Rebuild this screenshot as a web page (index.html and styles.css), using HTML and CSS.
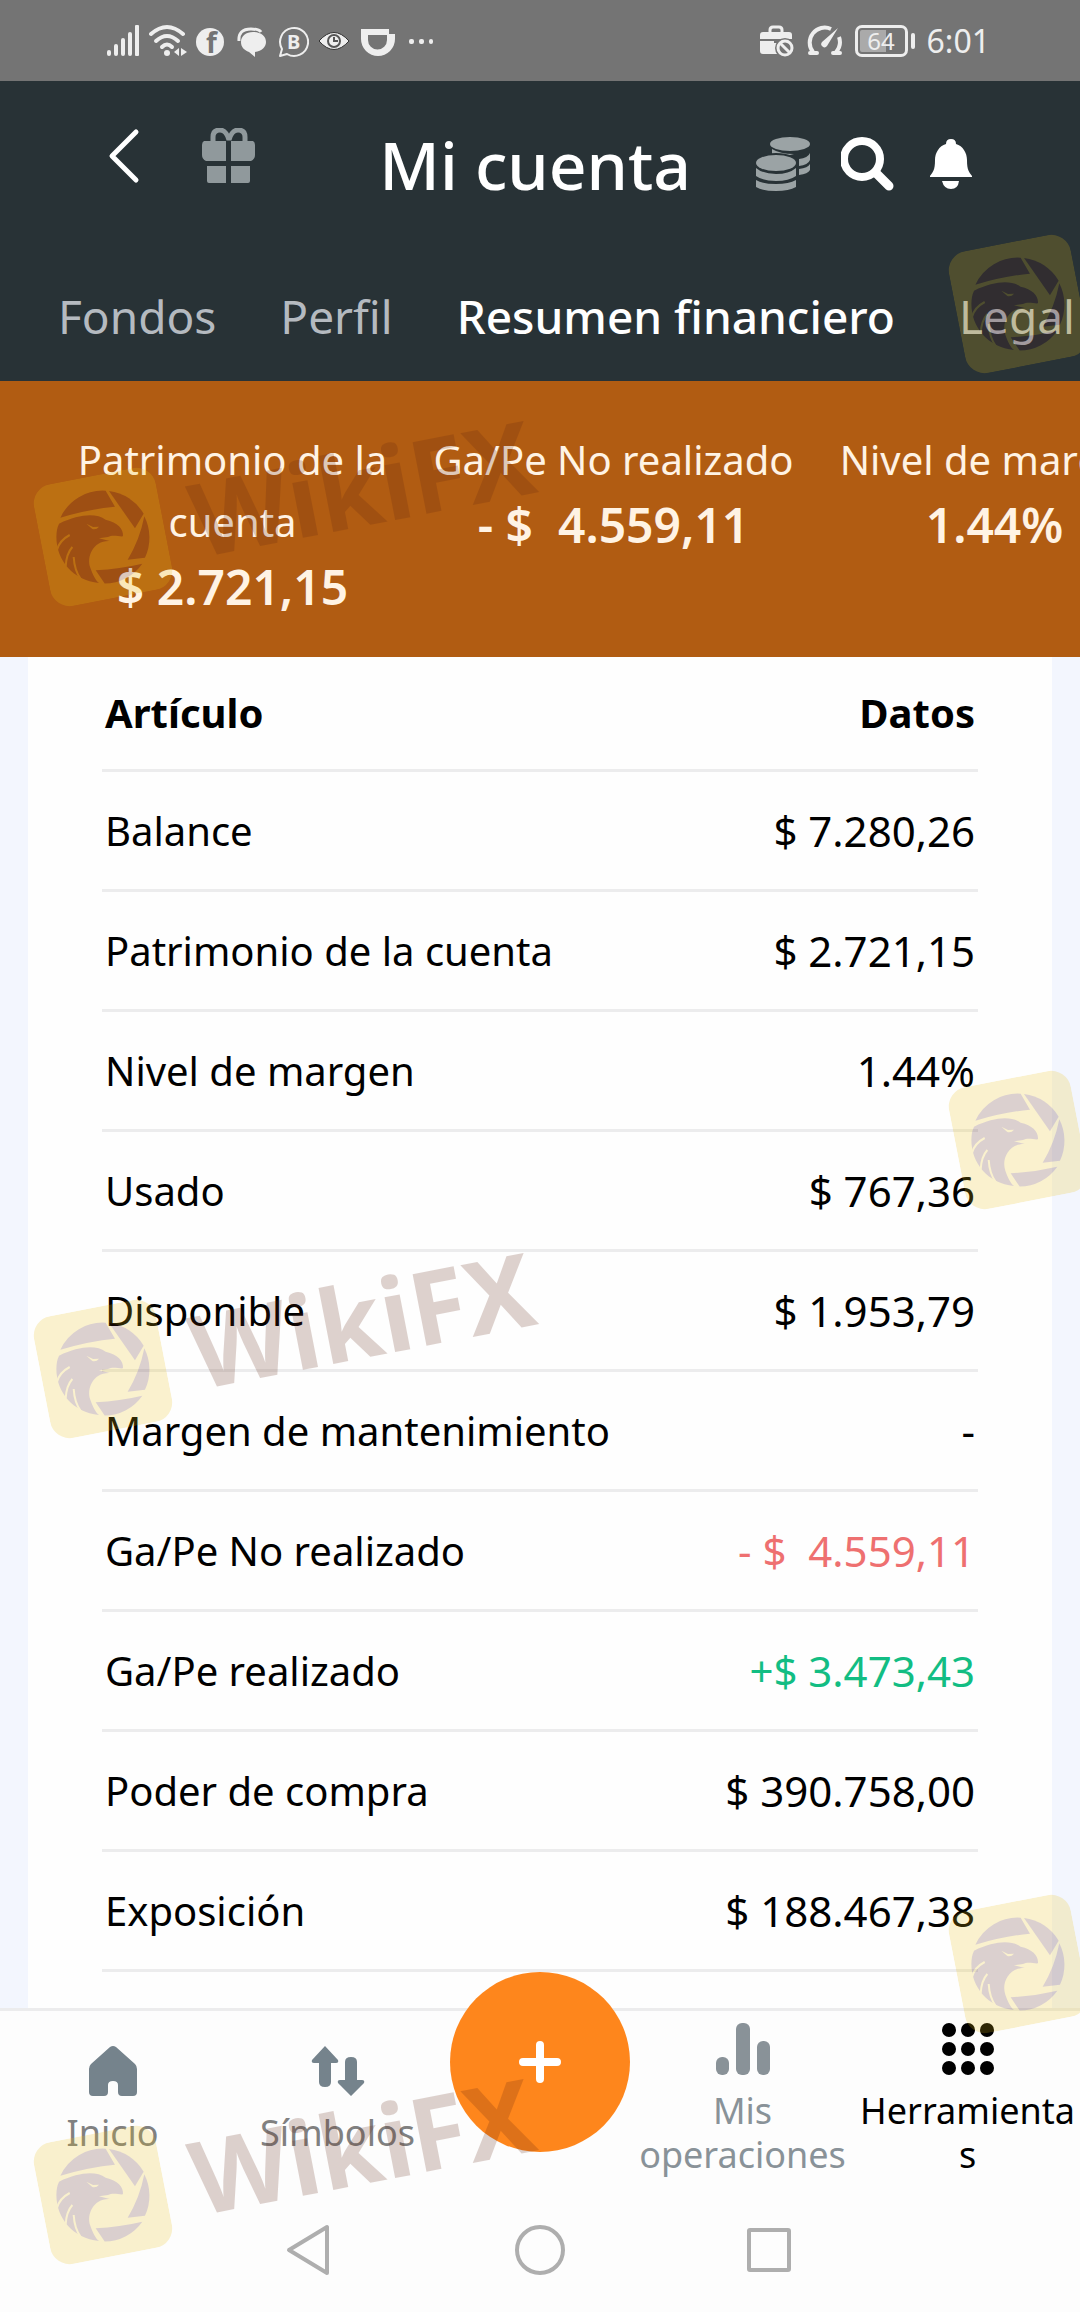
FILE: index.html
```html
<!DOCTYPE html>
<html lang="es">
<head>
    <meta charset="UTF-8">
    <meta name="viewport" content="width=device-width, initial-scale=1">
    <title>Mi cuenta</title>
    <link rel="stylesheet" href="styles.css">
</head>
<body>
<div class="app">

    <div class="status-bar">
        <div class="status-left">
            <svg width="34" height="34" viewBox="0 0 34 34"><g fill="#eee"><rect x="0" y="26" width="4" height="6" rx="2"/><rect x="7" y="20" width="4" height="12" rx="2"/><rect x="14" y="14" width="4" height="18" rx="2"/><rect x="21" y="8" width="4" height="24" rx="2"/><rect x="28" y="1" width="4" height="31" rx="1"/></g></svg>
            <svg width="38" height="34" viewBox="0 0 38 34"><g fill="none" stroke="#eee" stroke-width="4" stroke-linecap="round"><path d="M2 10Q18-4 34 10"/><path d="M7 17Q18 7 29 17"/><path d="M13 23Q18 18 23 23"/></g><circle cx="18" cy="29" r="3" fill="#eee"/><path d="M30 24v8l-5-4zM32 24v8l6-4z" fill="#eee"/></svg>
            <svg width="30" height="34" viewBox="0 0 30 34"><circle cx="15" cy="18" r="14" fill="#eee"/><text x="11" y="29" class="glyph-f">f</text></svg>
            <svg width="36" height="34" viewBox="0 0 36 34"><path d="M6 17Q5 5 18 5q8 0 10 3" fill="none" stroke="#eee" stroke-width="3"/><path d="M20 8c8 0 13 4 13 10 0 5-4 9-11 10v5l-6-5c-5-2-8-5-8-10 0-6 5-10 12-10z" fill="#eee"/></svg>
            <svg width="32" height="34" viewBox="0 0 32 34"><path d="M3 32l2-7a14 14 0 1 1 5 5z" fill="none" stroke="#eee" stroke-width="2" stroke-linejoin="round"/><text x="10" y="25" class="glyph-b">B</text></svg>
            <svg width="34" height="34" viewBox="0 0 34 34"><path d="M2 17Q17 0 32 17Q17 34 2 17z" fill="#eee" stroke="#333" stroke-width="1"/><circle cx="17" cy="17" r="6" fill="#eee" stroke="#555" stroke-width="2"/><path d="M17 13v4h4" fill="none" stroke="#555" stroke-width="2"/></svg>
            <svg width="36" height="34" viewBox="0 0 36 34"><path d="M2 5h28v5h6v5a17 17 0 0 1-34 0zM9 11v5a9 9 0 0 0 19 0v-5z" fill="#eee" fill-rule="evenodd"/></svg>
            <svg width="30" height="34" viewBox="0 0 30 34"><g fill="#eee"><rect x="6" y="15" width="5" height="5" rx="2"/><rect x="16" y="15" width="5" height="5" rx="2"/><rect x="26" y="15" width="4" height="5" rx="2"/></g></svg>
        </div>
        <div class="status-right">
            <svg width="36" height="34" viewBox="0 0 36 34"><path d="M11 9V6q0-3 3-3h6q3 0 3 3v3" fill="none" stroke="#eee" stroke-width="3"/><path d="M1 11q0-3 3-3h26q3 0 3 3v4H1zM1 17h14v2h4q-3 4-1 11H4q-3 0-3-3z" fill="#eee"/><circle cx="26" cy="24" r="10" fill="#747474"/><circle cx="26" cy="24" r="7" fill="none" stroke="#eee" stroke-width="3"/><path d="M21 19l10 10" stroke="#eee" stroke-width="3"/></svg>
            <svg width="36" height="34" viewBox="0 0 36 34"><path d="M24 5A15 15 0 0 0 6 28M32 13a15 15 0 0 1-3 15" fill="none" stroke="#eee" stroke-width="4"/><path d="M3 29h7M26 29h7" stroke="#eee" stroke-width="4" stroke-linecap="round"/><path d="M31 4L20 22a3 3 0 0 1-5-4z" fill="#eee"/></svg>
            <span class="battery">64</span>
            <span class="clock">6:01</span>
        </div>
    </div>

    <header class="header">
        <div class="title-row">
            <div class="title-left">
                <button type="button" aria-label="Volver">
                    <svg width="32" height="56" viewBox="0 0 32 56"><path d="M28 4L4 28L28 52" fill="none" stroke="#fff" stroke-width="5" stroke-linecap="round" stroke-linejoin="round"/></svg>
                </button>
                <button type="button" aria-label="Regalos">
                    <svg width="56" height="56" viewBox="0 0 56 56"><path d="M13 14V9q0-7 7-7c5 0 8 6 9 10c1-4 4-10 9-10q7 0 7 7v5" fill="none" stroke="#90999c" stroke-width="5"/><g fill="#90999c"><path d="M4 13h22v20H6q-4-2-4-6V17q0-3 2-4zM31 13h22q2 1 2 4v10q0 4-4 6H31zM7 38h19v17H9q-2 0-2-2zM31 38h19v15q0 2-2 2H31z"/></g></svg>
                </button>
            </div>
            <h1>Mi cuenta</h1>
            <div class="title-right">
                <button type="button" aria-label="Depósitos">
                    <svg width="56" height="56" viewBox="0 0 56 56"><g fill="#9ba3a5"><path d="M44 23q9-1 11-6v7q-2 5-11 6zM44 33q9-1 11-5v6q-2 4-11 5z"/><ellipse cx="35" cy="8" rx="20" ry="7"/><path d="M17 13q8 5 22 5l-8 2q-8-2-14-2z"/></g><ellipse cx="21" cy="27" rx="23" ry="10" fill="#283236"/><g fill="#9ba3a5"><ellipse cx="21" cy="27" rx="20" ry="8"/><path d="M1 32q7 6 20 6t20-6v8q-7 5-20 5T1 40zM1 44q7 4 20 4t20-4v7q-7 4-20 4T1 51z"/></g></svg>
                </button>
                <button type="button" aria-label="Buscar">
                    <svg width="56" height="56" viewBox="0 0 56 56"><circle cx="21" cy="23" r="18" fill="none" stroke="#fff" stroke-width="8"/><path d="M35 37L48 50" stroke="#fff" stroke-width="9" stroke-linecap="round"/></svg>
                </button>
                <button type="button" aria-label="Notificaciones">
                    <svg width="48" height="56" viewBox="0 0 48 56"><path d="M24 3q5 0 5 5c7 2 11 9 11 16 0 10 2 12 5 16v1H3v-1c3-4 5-6 5-16 0-7 4-14 11-16q0-5 5-5zM15 45h17q-1 8-8 8t-9-8z" fill="#fff"/></svg>
                </button>
            </div>
        </div>
        <nav class="tabs">
            <a href="#fondos">Fondos</a>
            <a href="#perfil">Perfil</a>
            <a href="#resumen" class="active">Resumen financiero</a>
            <a href="#legal">Legal</a>
        </nav>
    </header>

    <section class="summary">
        <div class="summary-item">
            <p>Patrimonio de la cuenta</p>
            <strong>$ 2.721,15</strong>
        </div>
        <div class="summary-item">
            <p>Ga/Pe No realizado</p>
            <strong>- $&nbsp; 4.559,11</strong>
        </div>
        <div class="summary-item">
            <p>Nivel de margen</p>
            <strong>1.44%</strong>
        </div>
    </section>

    <main class="content">
        <div class="card">
            <table>
                <thead>
                <tr><th>Artículo</th><th>Datos</th></tr>
                </thead>
                <tbody>
                <tr><td>Balance</td><td>$ 7.280,26</td></tr>
                <tr><td>Patrimonio de la cuenta</td><td>$ 2.721,15</td></tr>
                <tr><td>Nivel de margen</td><td>1.44%</td></tr>
                <tr><td>Usado</td><td>$ 767,36</td></tr>
                <tr><td>Disponible</td><td>$ 1.953,79</td></tr>
                <tr><td>Margen de mantenimiento</td><td>-</td></tr>
                <tr><td>Ga/Pe No realizado</td><td class="loss">- $&nbsp; 4.559,11</td></tr>
                <tr><td>Ga/Pe realizado</td><td class="gain">+$ 3.473,43</td></tr>
                <tr><td>Poder de compra</td><td>$ 390.758,00</td></tr>
                <tr><td>Exposición</td><td>$ 188.467,38</td></tr>
                </tbody>
            </table>
        </div>
    </main>

    <nav class="bottom-nav">
        <a href="#inicio" class="nav-item">
            <svg width="52" height="52" viewBox="0 0 52 52"><path d="M23 2q3-2 6 0L48 19q2 2 2 5v23q0 4-4 4H35q-4 0-4-4v-7q0-4-5-4t-5 4v7q0 4-4 4H6q-4 0-4-4V24q0-3 2-5z" fill="#75838c"/></svg>
            <span>Inicio</span>
        </a>
        <a href="#simbolos" class="nav-item">
            <svg width="54" height="52" viewBox="0 0 54 52"><path d="M14 1L27 15q1 3-2 3h-5v19q0 5-6 5t-6-5V18H3q-3 0-2-3zM40 51L27 38q-1-3 2-3h5V17q0-5 6-5t6 5v18h5q3 0 2 3z" fill="#75838c"/></svg>
            <span>Símbolos</span>
        </a>
        <button type="button" class="add" aria-label="Nueva operación">
            <svg width="42" height="42" viewBox="0 0 42 42"><path d="M21 4v34M4 21h34" stroke="#fff" stroke-width="8" stroke-linecap="round"/></svg>
        </button>
        <a href="#operaciones" class="nav-item tall">
            <svg width="54" height="52" viewBox="0 0 54 52"><g fill="#899298"><rect x="0" y="34" width="13" height="18" rx="6"/><rect x="20" y="0" width="14" height="52" rx="6"/><rect x="41" y="18" width="13" height="34" rx="6"/></g></svg>
            <span>Mis operaciones</span>
        </a>
        <a href="#herramientas" class="nav-item tall active">
            <svg width="52" height="52" viewBox="0 0 52 52"><circle cx="7" cy="7" r="7"/><circle cx="26" cy="7" r="7"/><circle cx="45" cy="7" r="7"/><circle cx="7" cy="26" r="7"/><circle cx="26" cy="26" r="7"/><circle cx="45" cy="26" r="7"/><circle cx="7" cy="45" r="7"/><circle cx="26" cy="45" r="7"/><circle cx="45" cy="45" r="7"/></svg>
            <span>Herramientas</span>
        </a>
    </nav>

    <div class="system-nav">
        <button type="button" aria-label="Atrás"><svg width="52" height="52" viewBox="0 0 52 52"><path d="M42 3v46L4 26z" fill="none" stroke="#aeaeae" stroke-width="4" stroke-linejoin="round"/></svg></button>
        <button type="button" aria-label="Pantalla de inicio"><svg width="52" height="52" viewBox="0 0 52 52"><circle cx="26" cy="26" r="23" fill="none" stroke="#aeaeae" stroke-width="4"/></svg></button>
        <button type="button" aria-label="Recientes"><svg width="52" height="52" viewBox="0 0 52 52"><rect x="6" y="6" width="40" height="40" rx="1" fill="none" stroke="#aeaeae" stroke-width="4"/></svg></button>
    </div>

    <!-- eagle logo, shared by all the marks -->
    <svg class="defs" width="0" height="0">
        <symbol id="eagle" viewBox="0 0 124 124">
            <rect width="124" height="124" rx="20" fill="#ebc014"/>
            <g transform="translate(62 62) rotate(11) scale(.333)" fill="#551e1a">
                <path d="M-128-58A140 140 0 0 1 8-139L36-91Q-40-84-128-58z"/>
                <path d="M18-138A140 140 0 0 1 122-70L96-26z"/>
                <path d="M124-62A140 140 0 0 1 126 62L74 68Q110 10 124-62z"/>
                <path d="M118 80A140 140 0 0 1 5 140L-22 100Q50 96 118 80z"/>
                <path d="M-132-40C-70-70-20-72 8-52C44-44 62-25 60-2C50 0 30-8 15 0L-12 4L20 12C-30 10-50 60-38 92C-30 115-22 130-12 138C-90 130-140 70-140 0Q-140-24-132-40z"/>
                <path d="M-50-40l20 10 18-1q-8 10-20 7z" fill="#ebc014"/>
                <path d="M-138 38Q-130 10-100-6M-112 88Q-110 50-92 30M-88 60Q-86 100-66 128" fill="none" stroke="#ebc014" stroke-width="6"/>
            </g>
        </symbol>
    </svg>
    <div class="mark mark-1"><svg><use href="#eagle"/></svg><span>WikiFX</span></div>
    <div class="mark mark-2"><svg><use href="#eagle"/></svg><span>WikiFX</span></div>
    <div class="mark mark-3"><svg><use href="#eagle"/></svg><span>WikiFX</span></div>
    <div class="mark mark-4"><svg><use href="#eagle"/></svg></div>
    <div class="mark mark-5"><svg><use href="#eagle"/></svg></div>
    <div class="mark mark-6"><svg><use href="#eagle"/></svg></div>
</div>
</body>
</html>
```

FILE: styles.css
```css
* {
    padding: 0;
    margin: 0;
    box-sizing: border-box;
}
body {
    font-family: "Noto Sans", "Open Sans", sans-serif;
    font-size: 40px;
    color: #000;
    background-color: #f3f6fe;
}
a {
    text-decoration: none;
    color: inherit;
}
button {
    border: none;
    background: none;
    font: inherit;
    cursor: pointer;
}
svg {
    display: block;
    flex-shrink: 0;
}
.app {
    position: relative;
    display: flex;
    flex-direction: column;
    height: 100vh;
    overflow: hidden;
}

/* phone status bar */
.status-bar {
    display: flex;
    justify-content: space-between;
    align-items: center;
    height: 81px;
    flex-shrink: 0;
    padding: 0 90px 0 107px;
    background-color: #747474;
    color: #eee;
}
.status-left,
.status-right {
    display: flex;
    align-items: center;
}
.status-left {
    gap: 8px;
}
.status-right {
    gap: 12px;
}
.glyph-f {
    font-size: 28px;
    font-weight: 700;
    fill: #747474;
}
.glyph-b {
    font-size: 20px;
    font-weight: 700;
    fill: #eee;
}
.battery {
    position: relative;
    width: 53px;
    height: 32px;
    margin-right: 7px;
    border: 3px solid #eee;
    border-radius: 7px;
    background: linear-gradient(90deg, #aaa 60%, #747474 60%);
    background-clip: content-box;
    padding: 2px;
    font-size: 24px;
    line-height: 22px;
    text-align: center;
}
.battery::after {
    content: "";
    position: absolute;
    right: -10px;
    top: 5px;
    width: 4px;
    height: 16px;
    border-radius: 2px;
    background-color: #eee;
}
.clock {
    font-size: 32px;
}

/* header */
.header {
    flex-shrink: 0;
    background-color: #283236;
    color: #fff;
}
.title-row {
    display: flex;
    align-items: center;
    height: 166px;
    padding: 0 105px 0 108px;
}
.title-left {
    display: flex;
    gap: 60px;
    padding-bottom: 16px;
}
.title-right {
    display: flex;
    gap: 30px;
    margin-left: 64px;
}
h1 {
    margin-left: auto;
    font-size: 66px;
    font-weight: 500;
    white-space: nowrap;
}
.tabs {
    display: flex;
    gap: 64px;
    padding: 36px 0 32px 58px;
    overflow: hidden;
    font-size: 46px;
    line-height: 66px;
    white-space: nowrap;
    color: #b5bac0;
}
.tabs .active {
    color: #fff;
    font-weight: 500;
}

.summary {
    display: flex;
    flex-shrink: 0;
    padding: 48px 0 36px 42px;
    overflow: hidden;
    background-color: #b15c12;
    color: #fff3e4;
    text-align: center;
}
.summary-item {
    flex: 0 0 381px;
    padding: 0 6px;
}
.summary-item p {
    line-height: 62px;
}
.summary-item strong {
    display: block;
    font-size: 48px;
    font-weight: 600;
    line-height: 68px;
}

/* data table */
.content {
    flex: 1;
    min-height: 0;
    overflow: hidden;
    padding: 0 28px;
}
.card {
    height: 100%;
    padding: 0 74px;
    background-color: #fefefe;
}
table {
    width: 100%;
    border-collapse: collapse;
}
th,
td {
    height: 120px;
    padding: 0 3px;
    border-bottom: 3px solid #ececed;
    text-align: left;
}
th {
    height: 113px;
    font-weight: 700;
}
th:last-child,
td:last-child {
    text-align: right;
    white-space: nowrap;
}
td:last-child {
    font-size: 42px;
}
.loss {
    color: #ee7070;
}
.gain {
    color: #12bd83;
}

/* bottom navigation */
.bottom-nav {
    display: flex;
    flex-shrink: 0;
    height: 180px;
    border-top: 3px solid #ececed;
    background-color: #fdfdfd;
    font-size: 36px;
    line-height: 44px;
    text-align: center;
    color: #808080;
}
.nav-item {
    flex: 1 1 0;
    min-width: 0;
    display: flex;
    flex-direction: column;
    align-items: center;
    gap: 14px;
    padding-top: 34px;
}
.nav-item span {
    max-width: 100%;
    overflow-wrap: anywhere;
}
.nav-item.tall {
    padding-top: 12px;
    color: #899298;
}
.nav-item.tall.active {
    color: #000;
}
.add {
    display: flex;
    align-items: center;
    justify-content: center;
    width: 180px;
    height: 180px;
    margin-top: -39px;
    border-radius: 50%;
    background-color: #fe861c;
}
.system-nav {
    display: flex;
    flex-shrink: 0;
    justify-content: center;
    align-items: center;
    gap: 177px;
    height: 124px;
    background-color: #fdfdfd;
}

/* tilted marks lying over the page */
.defs {
    position: absolute;
}
.mark {
    position: absolute;
    display: flex;
    align-items: center;
    gap: 28px;
    height: 124px;
    opacity: 0.2;
    transform: rotate(-11deg);
    transform-origin: 62px 62px;
    pointer-events: none;
    color: #5f230f;
    font-size: 102px;
    font-weight: 700;
    line-height: 124px;
}
.mark svg {
    width: 124px;
    height: 124px;
}
.mark-1,
.mark-2,
.mark-3 {
    left: 41px;
}
.mark-4,
.mark-5,
.mark-6 {
    left: 956px;
}
.mark-1 {
    top: 475px;
}
.mark-2 {
    top: 1307px;
}
.mark-3 {
    top: 2133px;
}
.mark-4 {
    top: 242px;
}
.mark-5 {
    top: 1078px;
}
.mark-6 {
    top: 1902px;
}
```
